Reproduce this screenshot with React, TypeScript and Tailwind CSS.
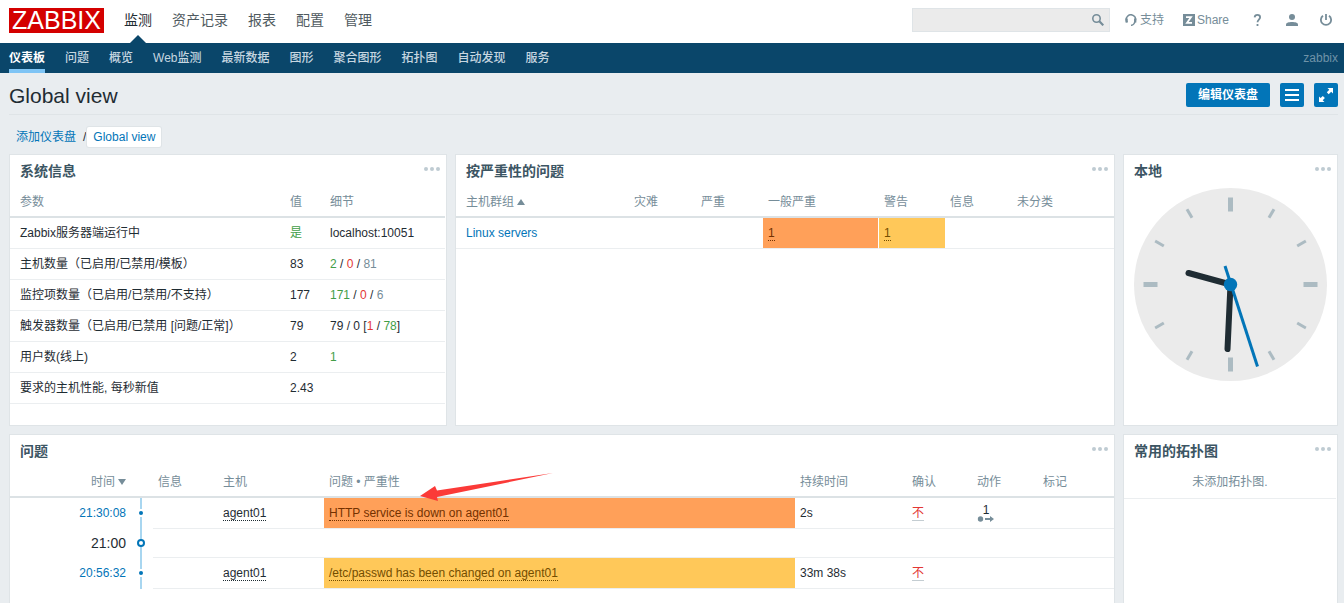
import type { ReactNode } from 'react';

const mainMenu = ['监测', '资产记录', '报表', '配置', '管理'];
const subMenu = ['仪表板', '问题', '概览', 'Web监测', '最新数据', '图形', '聚合图形', '拓扑图', '自动发现', '服务'];

const green = 'text-[#429e47]';
const red = 'text-[#e33734]';
const grey = 'text-[#768d99]';

const systemInfo: { name: string; value: ReactNode; details?: ReactNode }[] = [
  { name: 'Zabbix服务器端运行中', value: <span className={green}>是</span>, details: 'localhost:10051' },
  {
    name: '主机数量（已启用/已禁用/模板）',
    value: '83',
    details: <><span className={green}>2</span> / <span className={red}>0</span> / <span className={grey}>81</span></>,
  },
  {
    name: '监控项数量（已启用/已禁用/不支持）',
    value: '177',
    details: <><span className={green}>171</span> / <span className={red}>0</span> / <span className={grey}>6</span></>,
  },
  {
    name: '触发器数量（已启用/已禁用 [问题/正常]）',
    value: '79',
    details: <>79 / 0 [<span className={red}>1</span> / <span className={green}>78</span>]</>,
  },
  { name: '用户数(线上)', value: '2', details: <span className={green}>1</span> },
  { name: '要求的主机性能, 每秒新值', value: '2.43' },
];

function Widget({ title, className = '', children }: { title: string; className?: string; children: ReactNode }) {
  return (
    <section className={`relative min-w-0 border border-[#dfe4e7] bg-white ${className}`}>
      <div className="flex h-8 items-center justify-between pr-1.5 pl-2.5">
        <h4 className="text-sm font-bold text-[#3c5563]">{title}</h4>
        <button aria-label="菜单" className="mb-1">
          <svg width="16" height="4" fill="#bfcbd2">
            <circle cx="2" cy="2" r="2" />
            <circle cx="8" cy="2" r="2" />
            <circle cx="14" cy="2" r="2" />
          </svg>
        </button>
      </div>
      {children}
    </section>
  );
}

function Th({ children, className = 'px-[5px]' }: { children?: ReactNode; className?: string }) {
  return <th className={`border-b-2 border-[#dce2e5] text-left font-normal whitespace-nowrap text-[#768d99] ${className}`}>{children}</th>;
}

function Td({ children, className = 'px-[5px]' }: { children?: ReactNode; className?: string }) {
  return <td className={`border-b border-[#ebeef0] whitespace-nowrap ${className}`}>{children}</td>;
}

function SystemInfo() {
  return (
    <div className="pr-px">
      <table className="w-full table-fixed border-separate border-spacing-0">
        <colgroup>
          <col />
          <col className="w-[40px]" />
          <col className="w-[120px]" />
        </colgroup>
        <thead>
          <tr className="h-[31px]">
            <Th className="pl-2.5">参数</Th>
            <Th>值</Th>
            <Th>细节</Th>
          </tr>
        </thead>
        <tbody>
          {systemInfo.map((row) => (
            <tr key={row.name} className="h-[31px]">
              <Td className="pl-2.5">{row.name}</Td>
              <Td>{row.value}</Td>
              <Td>{row.details}</Td>
            </tr>
          ))}
        </tbody>
      </table>
    </div>
  );
}

function SeverityTable() {
  return (
    <table className="w-full table-fixed border-separate border-spacing-0">
      <colgroup>
        <col />
        <col className="w-[67px]" />
        <col className="w-[67px]" />
        <col className="w-[116px]" />
        <col className="w-[66px]" />
        <col className="w-[67px]" />
        <col className="w-[102px]" />
      </colgroup>
      <thead>
        <tr className="h-[31px]">
          <Th className="pl-2.5">
            主机群组
            <svg className="ml-[3px] inline-block" width="8" height="6" fill="#768d99"><path d="M0 6 4 0l4 6z" /></svg>
          </Th>
          <Th>灾难</Th>
          <Th>严重</Th>
          <Th>一般严重</Th>
          <Th>警告</Th>
          <Th>信息</Th>
          <Th>未分类</Th>
        </tr>
      </thead>
      <tbody>
        <tr className="h-[31px]">
          <Td className="pl-2.5"><a href="#" className="text-[#0275b8]">Linux servers</a></Td>
          <Td />
          <Td />
          <Td className="border-r border-r-white bg-[#ffa059] bg-clip-padding px-[5px] text-[#733100] [border-right-style:dotted]">
            <a href="#" className="border-b border-dotted border-current">1</a>
          </Td>
          <Td className="bg-[#ffc859] bg-clip-padding px-[5px] text-[#734d00]">
            <a href="#" className="border-b border-dotted border-current">1</a>
          </Td>
          <Td />
          <Td />
        </tr>
      </tbody>
    </table>
  );
}

const minorTicks = [30, 60, 120, 150, 210, 240, 300, 330];

function Clock() {
  return (
    <svg className="mx-auto mt-px" width="193" height="193" viewBox="0 0 193 193">
      <circle cx="96.5" cy="96.5" r="96.5" fill="#ebebeb" />
      <g fill="#acbbc2">
        {[0, 90, 180, 270].map((a) => (
          <rect key={a} x="94" y="9.5" width="5" height="14" transform={`rotate(${a} 96.5 96.5)`} />
        ))}
        {minorTicks.map((a) => (
          <rect key={a} x="95" y="9.5" width="3" height="10" transform={`rotate(${a} 96.5 96.5)`} />
        ))}
      </g>
      <g stroke="#1f2c33" strokeWidth="6" strokeLinecap="round">
        <path d="M96.5 96.5 54.5 85" />
        <path d="M96.5 96.5 93.5 161" />
      </g>
      <path d="M91 78 123.5 178.500" stroke="#0275b8" strokeWidth="3" />
      <circle cx="96.5" cy="96.5" r="6.700" fill="#0275b8" />
    </svg>
  );
}

function TimelineMark({ hour = false }: { hour?: boolean }) {
  const h = hour ? 29 : 31;
  return (
    <svg className="block" width="23" height={h}>
      <path d={`M11 0V${h}`} stroke="#a8d6f0" strokeWidth="2" />
      {hour ? (
        <circle cx="11" cy="14" r="3" fill="#fff" stroke="#0275b8" strokeWidth="2" />
      ) : (
        <>
          <path d="M11 11v8" stroke="#fff" strokeWidth="4" />
          <circle cx="11" cy="15" r="2" fill="#0275b8" />
        </>
      )}
    </svg>
  );
}

interface ProblemRow {
  time: string;
  problem: string;
  color: string;
  duration: string;
  actions?: number;
}

const problems: ProblemRow[] = [
  { time: '21:30:08', problem: 'HTTP service is down on agent01', color: 'bg-[#ffa059] text-[#733100]', duration: '2s', actions: 1 },
  { time: '20:56:32', problem: '/etc/passwd has been changed on agent01', color: 'bg-[#ffc859] text-[#734d00]', duration: '33m 38s' },
];

function Problem({ row }: { row: ProblemRow }) {
  return (
    <tr className="h-[31px]">
      <td className="border-b border-transparent pr-1 text-right"><a href="#" className="text-[#0275b8]">{row.time}</a></td>
      <td className="p-0"><TimelineMark /></td>
      <Td />
      <Td><a href="#" className="border-b border-dotted border-current">agent01</a></Td>
      <Td className={`bg-clip-padding px-[5px] ${row.color}`}>
        <a href="#" className="border-b border-dotted border-current">{row.problem}</a>
      </Td>
      <Td>{row.duration}</Td>
      <Td><a href="#" className="border-b border-[#c4cdd2] text-[#e33734]">不</a></Td>
      <Td>
        {row.actions && (
          <button className="flex w-[18px] flex-col items-center leading-3">
            {row.actions}
            <svg width="18" height="6" fill="#768d99">
              <circle cx="3.500" cy="3" r="2.700" />
              <path d="M8 2h5V0l4 3-4 3V4H8z" />
            </svg>
          </button>
        )}
      </Td>
      <Td />
    </tr>
  );
}

function ProblemsTable() {
  return (
    <table className="w-full table-fixed border-separate border-spacing-0">
      <colgroup>
        <col className="w-[120px]" />
        <col className="w-[23px]" />
        <col className="w-[65px]" />
        <col className="w-[106px]" />
        <col />
        <col className="w-[112px]" />
        <col className="w-[65px]" />
        <col className="w-[66px]" />
        <col className="w-[76px]" />
      </colgroup>
      <thead>
        <tr className="h-[31px]">
          <Th className="pr-1 text-right!">
            时间
            <svg className="ml-[3px] inline-block" width="8" height="6" fill="#768d99"><path d="M0 0h8L4 6z" /></svg>
          </Th>
          <Th className="p-0" />
          <Th>信息</Th>
          <Th>主机</Th>
          <Th>问题 • 严重性</Th>
          <Th>持续时间</Th>
          <Th>确认</Th>
          <Th>动作</Th>
          <Th>标记</Th>
        </tr>
      </thead>
      <tbody>
        <Problem row={problems[0]} />
        <tr className="h-[29px]">
          <td className="border-b border-transparent pr-1 text-right text-sm">21:00</td>
          <td className="p-0"><TimelineMark hour /></td>
          <td colSpan={7} className="border-b border-[#ebeef0]" />
        </tr>
        <Problem row={problems[1]} />
      </tbody>
    </table>
  );
}

function Header() {
  return (
    <header>
      <div className="flex h-[43px] items-center bg-white pr-1.5 pl-[9px]">
        <a href="#" className="mb-0.5 flex h-[25px] w-[95px] items-center justify-center bg-[#d40000] text-[25px] leading-none text-white">ZABBIX</a>
        <nav className="flex h-full items-center gap-5 pl-5 text-sm text-[#4f5a60]">
          {mainMenu.map((item, i) => (
            <a key={item} href="#" className={i === 0 ? 'relative flex h-full items-center pb-1 text-[#1f2c33]' : 'pb-1'}>
              {item}
              {i === 0 && (
                <svg className="absolute bottom-0 left-1/2 -translate-x-1/2" width="16" height="8" fill="#0a466a"><path d="M0 8 8 0l8 8z" /></svg>
              )}
            </a>
          ))}
        </nav>
        <div className="ml-auto flex items-center pb-1 text-[#768d99]">
          <div className="relative mr-[15px]">
            <input aria-label="搜索" className="block h-6 w-[198px] border border-[#dfe4e7] bg-[#ebebeb] pr-6 pl-1 outline-none" />
            <button aria-label="搜索" className="absolute top-1.5 right-1.5">
              <svg width="12" height="12" fill="none" stroke="#768d99">
                <circle cx="4.500" cy="4.500" r="3.700" strokeWidth="1.600" />
                <path d="m7.300 7.300 4 4" strokeWidth="2.200" />
              </svg>
            </button>
          </div>
          <a href="#" className="flex items-center gap-[3px]">
            <svg width="12" height="12" fill="none" stroke="#768d99">
              <path d="M2.200 8.200A4.600 4.600 0 1 1 10 7.500c-.3 1.800-1.500 3.500-4 3.900" strokeWidth="1.500" />
              <path d="M1.600 4.500v4M10.200 4.500v4" strokeWidth="2.300" />
            </svg>
            支持
          </a>
          <a href="#" className="ml-[19px] flex items-center gap-0.5">
            <svg width="12" height="12">
              <path d="M0 0h12v12H0z" fill="#768d99" />
              <path d="M3 3.200h5L4 8.800h5" fill="none" stroke="#fff" strokeWidth="1.800" />
            </svg>
            Share
          </a>
          <a href="#" aria-label="帮助" className="ml-6">
            <svg width="9" height="12" fill="none" stroke="#768d99" strokeWidth="1.800">
              <path d="M1.600 3.300C1.800 1.800 2.800.9 4.400.9c1.700 0 2.700 1 2.700 2.400 0 2.100-2.600 2.500-2.600 4.900M4.500 9.900v2.100" />
            </svg>
          </a>
          <a href="#" aria-label="用户" className="ml-6">
            <svg width="12" height="12" fill="#768d99">
              <circle cx="6" cy="3" r="3" />
              <path d="M0 12v-1.500C0 8.700 3 8 6 8s6 .7 6 2.500V12z" />
            </svg>
          </a>
          <a href="#" aria-label="登出" className="ml-[22px] w-[18px]">
            <svg width="12" height="12" fill="none" stroke="#768d99" strokeWidth="1.800">
              <path d="M3 1.700a5.100 5.100 0 1 0 6 0M6 0v6" />
            </svg>
          </a>
        </div>
      </div>
      <nav className="flex h-[30px] gap-5 bg-[#0a466a] pr-1.5 pl-[9px] font-medium text-[#c6d6e0]">
        {subMenu.map((item, i) => (
          <a key={item} href="#" className={`flex items-center border-b-4 pt-1 ${i === 0 ? 'border-[#7ec4f5] font-bold text-white' : 'border-transparent'}`}>{item}</a>
        ))}
        <span className="ml-auto flex items-center font-normal text-[#6f93a8]">zabbix</span>
      </nav>
    </header>
  );
}

export default function App() {
  return (
    <div className="h-screen overflow-hidden bg-[#e9edf0] font-['Liberation_Sans','Noto_Sans_CJK_SC',sans-serif] text-xs leading-4 text-[#1f2c33]">
      <Header />
      <main className="pr-1.5 pl-[9px]">
        <div className="flex h-[42px] items-center gap-2.5 border-b border-[#dfe4e7]">
          <h1 className="mr-auto pt-1 text-[21px] leading-6">Global view</h1>
          <button className="mt-0.5 h-6 w-21 rounded-xs bg-[#0275b8] font-bold text-white">编辑仪表盘</button>
          <button aria-label="菜单" className="mt-0.5 flex size-6 items-center justify-center rounded-xs bg-[#0275b8]">
            <svg width="14" height="12" stroke="#fff" strokeWidth="2"><path d="M0 1h14M0 6h14M0 11h14" /></svg>
          </button>
          <button aria-label="全屏" className="mt-0.5 flex size-6 items-center justify-center rounded-xs bg-[#0275b8]">
            <svg width="14" height="14" fill="#fff">
              <path d="M8.500 0H14v5.500l-1.800-1.800L9.700 6.200 7.800 4.300l2.500-2.500zM0 8.500l1.600 1.600 2.200-2.200 2.100 2.100-2.200 2.200L5.500 14H0z" />
            </svg>
          </button>
        </div>
        <div className="flex h-[39px] items-center pt-1 pl-[7px] text-[#0275b8]">
          <a href="#">添加仪表盘</a>
          <span className="pl-[7px] text-[#1f2c33]">/</span>
          <a href="#" className="ml-px rounded-xs bg-white px-1.5 py-0.5 shadow-[0_0_0_1px_#dfe4e7]">Global view</a>
        </div>
        <div className="grid grid-cols-[438fr_660fr_215fr] grid-rows-[272px_272px] gap-2">
          <Widget title="系统信息"><SystemInfo /></Widget>
          <Widget title="按严重性的问题"><SeverityTable /></Widget>
          <Widget title="本地"><Clock /></Widget>
          <Widget title="问题" className="col-span-2">
            <ProblemsTable />
            <svg className="absolute top-[37px] left-[410px]" width="136" height="30" fill="#fb3a38">
              <path d="M0 24 15 14l2 4.500L133 1 17 25l1 4z" />
            </svg>
          </Widget>
          <Widget title="常用的拓扑图">
            <p className="mr-px border-b border-[#ebeef0] pt-[7px] pb-2 text-center text-[#768d99]">未添加拓扑图.</p>
          </Widget>
        </div>
      </main>
    </div>
  );
}
